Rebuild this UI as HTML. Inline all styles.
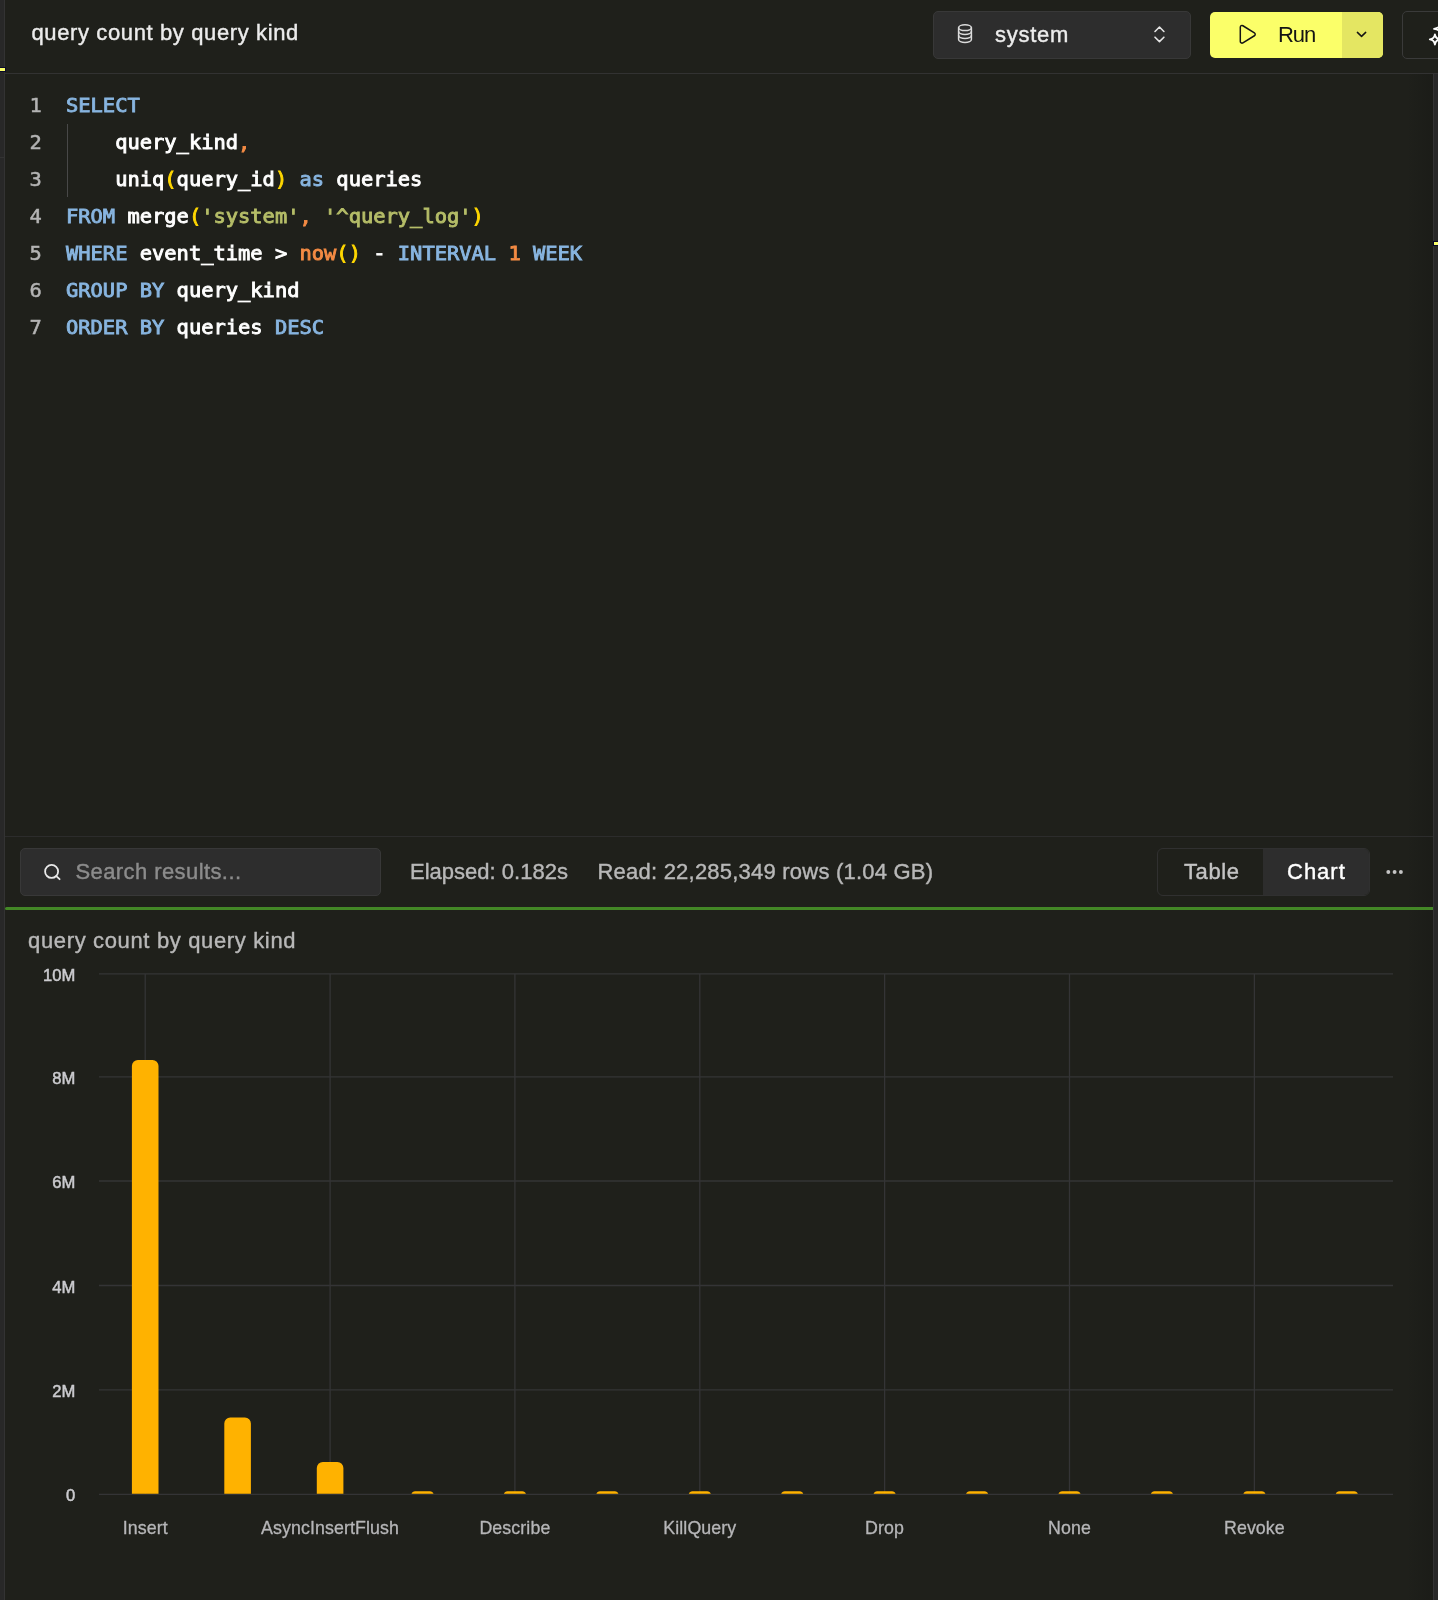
<!DOCTYPE html>
<html lang="en">
<head>
<meta charset="utf-8">
<title>query count by query kind</title>
<style>
*{box-sizing:border-box;margin:0;padding:0}
html,body{width:1438px;height:1600px;overflow:hidden;background:#1f201b}
body{position:relative;will-change:transform;font-family:"Liberation Sans",sans-serif;color:#e6e6e6}
.abs{position:absolute}
.t{position:absolute;white-space:nowrap;line-height:1;-webkit-text-stroke:.4px currentColor}
/* side strips */
#lstrip{left:0;top:0;width:5px;height:1600px;background:#282828;border-right:1px solid #333}
#rstrip{left:1433px;top:74px;width:5px;height:1526px;background:#282828;border-left:1px solid #333}
#hdrline{left:5px;top:73px;width:1433px;height:1px;background:#323232}
#resline{left:5px;top:836px;width:1428px;height:1px;background:#2c2c2c}
#green{left:5px;top:907px;width:1428px;height:3px;background:#438726;border-radius:2px 0 0 2px}
.box{position:absolute;background:#2d2d2d;border:1px solid #383838;border-radius:5px}
/* code */
#code{position:absolute;left:0;top:86.6px;width:1400px;font-family:"DejaVu Sans Mono","Liberation Mono",monospace;font-size:20px;line-height:37px;color:#fff;-webkit-text-stroke:0.9px currentColor}
#code .ln{position:absolute;left:0;width:41.800px;text-align:right;color:#b4b4b4;-webkit-text-stroke:.5px currentColor;transform:scaleX(1.0205);transform-origin:100% 50%;height:37px}
#code .cl{position:absolute;left:66px;white-space:pre;transform:scaleX(1.0205);transform-origin:0 50%;height:37px}
.k{color:#88b5e0}.s{color:#b5bd68}.p{color:#ffd700}.o{color:#f48b44}.n{color:#f48b44}.f{color:#f48b44}
</style>
</head>
<body>
<div id="lstrip" class="abs"></div>
<div id="rstrip" class="abs"></div>
<div class="abs" style="left:0;top:68px;width:5px;height:3px;background:#faff69;box-shadow:0 0 0 1px #0a0a2a"></div>
<div class="abs" style="left:0;top:157px;width:4px;height:1px;background:#333"></div>
<div class="abs" style="left:1434px;top:242px;width:4px;height:3px;background:#faff69;box-shadow:0 0 0 1px #07062a"></div>
<div class="abs" style="left:1406px;top:74px;width:27px;height:1526px;background:linear-gradient(to right,rgba(0,0,0,0),rgba(8,8,8,.16))"></div>
<div id="hdrline" class="abs"></div>

<!-- header -->
<div class="t" id="title" style="left:31.500px;top:21.5px;font-size:22px;letter-spacing:.62px;color:#ececec">query count by query kind</div>

<div class="box" style="left:933px;top:11px;width:258px;height:48px"></div>
<div class="t" id="sys" style="left:995px;top:23.5px;font-size:22px;letter-spacing:.75px;color:#ececec">system</div>

<div class="abs" id="runbtn" style="left:1210px;top:12px;width:173px;height:46px;border-radius:5px;background:#fbff69;overflow:hidden"><div class="abs" style="left:132px;top:0;width:41px;height:46px;background:#e4e662"></div></div>
<div class="t" id="run" style="left:1278px;top:23.5px;font-size:22px;letter-spacing:-1.1px;color:#141414;-webkit-text-stroke:0">Run</div>

<div class="abs" style="left:1402px;top:11px;width:60px;height:48px;border:1px solid #3a3a3a;border-radius:5px"></div>

<!-- code editor -->
<div id="code">
<div class="ln" style="top:0">1</div><div class="cl" style="top:0"><span class="k">SELECT</span></div>
<div class="ln" style="top:37px">2</div><div class="cl" style="top:37px">    query_kind<span class="o">,</span></div>
<div class="ln" style="top:74px">3</div><div class="cl" style="top:74px">    uniq<span class="p">(</span>query_id<span class="p">)</span> <span class="k">as</span> queries</div>
<div class="ln" style="top:111px">4</div><div class="cl" style="top:111px"><span class="k">FROM</span> merge<span class="p">(</span><span class="s">'system'</span><span class="o">,</span> <span class="s">'^query_log'</span><span class="p">)</span></div>
<div class="ln" style="top:148px">5</div><div class="cl" style="top:148px"><span class="k">WHERE</span> event_time &gt; <span class="f">now</span><span class="p">()</span> - <span class="k">INTERVAL</span> <span class="n">1</span> <span class="k">WEEK</span></div>
<div class="ln" style="top:185px">6</div><div class="cl" style="top:185px"><span class="k">GROUP BY</span> query_kind</div>
<div class="ln" style="top:222px">7</div><div class="cl" style="top:222px"><span class="k">ORDER BY</span> queries <span class="k">DESC</span></div>
</div>
<div class="abs" style="left:66.6px;top:124px;width:1.4px;height:73px;background:#484848"></div>

<!-- results toolbar -->
<div id="resline" class="abs"></div>
<div class="box" style="left:20px;top:848px;width:361px;height:48px"></div>
<div class="t" id="search" style="left:75.5px;top:860.5px;font-size:22px;letter-spacing:.41px;color:#8c8c8c">Search results...</div>
<div class="t" id="elapsed" style="left:410px;top:860.5px;font-size:22px;letter-spacing:.01px;color:#b8b8b8">Elapsed: 0.182s</div>
<div class="t" id="read" style="left:597.5px;top:860.5px;font-size:22px;letter-spacing:.22px;color:#b8b8b8">Read: 22,285,349 rows (1.04 GB)</div>
<div class="abs" style="left:1157px;top:848px;width:213px;height:48px;border:1px solid #303030;border-radius:6px;overflow:hidden"><div class="abs" style="left:105px;top:0;width:108px;height:48px;background:#2d2d2d"></div></div>
<div class="t" id="table" style="left:1184px;top:860.5px;font-size:22px;letter-spacing:.6px;color:#c4c4c4">Table</div>
<div class="t" id="chart" style="left:1287px;top:860.5px;font-size:22px;letter-spacing:1px;color:#fff">Chart</div>
<div id="green" class="abs"></div>

<!-- chart -->
<div class="t" id="ctitle" style="left:28px;top:930px;font-size:22px;letter-spacing:.65px;color:#b8b8b8">query count by query kind</div>
<svg id="chartsvg" class="abs" style="left:0;top:916px" width="1438" height="684" viewBox="0 916 1438 684" font-family="Liberation Sans, sans-serif">
<g stroke="#343436" stroke-width="1.3" fill="none">
<path d="M99 973.9H1393"/>
<path d="M99 1076.9H1393"/>
<path d="M99 1181.0H1393"/>
<path d="M99 1285.5H1393"/>
<path d="M99 1389.9H1393"/>
<path d="M99 1494.3H1393"/>
<path d="M145.2 973.9V1494.3"/>
<path d="M330.1 973.9V1494.3"/>
<path d="M514.9 973.9V1494.3"/>
<path d="M699.8 973.9V1494.3"/>
<path d="M884.6 973.9V1494.3"/>
<path d="M1069.5 973.9V1494.3"/>
<path d="M1254.4 973.9V1494.3"/>
</g>
<g fill="#ffb200">
<path d="M131.9 1493.8V1066.0a6 6 0 0 1 6 -6h14.6a6 6 0 0 1 6 6V1493.8z"/>
<path d="M224.3 1493.8V1423.5a6 6 0 0 1 6 -6h14.6a6 6 0 0 1 6 6V1493.8z"/>
<path d="M316.8 1493.8V1468.0a6 6 0 0 1 6 -6h14.6a6 6 0 0 1 6 6V1493.8z"/>
<path d="M411.5 1493.8c0.5 -1.6 1.8 -2.6 3.6 -2.6h14.8c1.8 0 3.1 1 3.6 2.6z"/>
<path d="M503.9 1493.8c0.5 -1.6 1.8 -2.6 3.6 -2.6h14.8c1.8 0 3.1 1 3.6 2.6z"/>
<path d="M596.4 1493.8c0.5 -1.6 1.8 -2.6 3.6 -2.6h14.8c1.8 0 3.1 1 3.6 2.6z"/>
<path d="M688.8 1493.8c0.5 -1.6 1.8 -2.6 3.6 -2.6h14.8c1.8 0 3.1 1 3.6 2.6z"/>
<path d="M781.2 1493.8c0.5 -1.6 1.8 -2.6 3.6 -2.6h14.8c1.8 0 3.1 1 3.6 2.6z"/>
<path d="M873.6 1493.8c0.5 -1.6 1.8 -2.6 3.6 -2.6h14.8c1.8 0 3.1 1 3.6 2.6z"/>
<path d="M966.1 1493.8c0.5 -1.6 1.8 -2.6 3.6 -2.6h14.8c1.8 0 3.1 1 3.6 2.6z"/>
<path d="M1058.5 1493.8c0.5 -1.6 1.8 -2.6 3.6 -2.6h14.8c1.8 0 3.1 1 3.6 2.6z"/>
<path d="M1150.9 1493.8c0.5 -1.6 1.8 -2.6 3.6 -2.6h14.8c1.8 0 3.1 1 3.6 2.6z"/>
<path d="M1243.4 1493.8c0.5 -1.6 1.8 -2.6 3.6 -2.6h14.8c1.8 0 3.1 1 3.6 2.6z"/>
<path d="M1335.8 1493.8c0.5 -1.6 1.8 -2.6 3.6 -2.6h14.8c1.8 0 3.1 1 3.6 2.6z"/>
</g>
<g fill="#cbcbcf" font-size="16.6" text-anchor="end" stroke="#cbcbcf" stroke-width="0.5">
<text x="75.3" y="981.0">10M</text>
<text x="75.3" y="1084.0">8M</text>
<text x="75.3" y="1188.1">6M</text>
<text x="75.3" y="1292.6">4M</text>
<text x="75.3" y="1397.0">2M</text>
<text x="75.3" y="1501.4">0</text>
</g>
<g fill="#b6b6b8" stroke="#b6b6b8" stroke-width="0.3" font-size="17.8" letter-spacing="0.1" text-anchor="middle">
<text id="xl0" x="145.2" y="1534">Insert</text>
<text id="xl1" x="330.1" y="1534">AsyncInsertFlush</text>
<text id="xl2" x="514.9" y="1534">Describe</text>
<text id="xl3" x="699.8" y="1534">KillQuery</text>
<text id="xl4" x="884.6" y="1534">Drop</text>
<text id="xl5" x="1069.5" y="1534">None</text>
<text id="xl6" x="1254.4" y="1534">Revoke</text>
</g>
</svg>
<svg class="abs" style="left:0;top:0" width="1438" height="920" viewBox="0 0 1438 920" fill="none" stroke-linecap="round" stroke-linejoin="round">
<g stroke="#dcdcdc" stroke-width="1.5"><ellipse cx="965" cy="27.7" rx="6.4" ry="2.9"/><path d="M958.6 27.7V39.5c0 1.6 2.9 2.9 6.4 2.9s6.4-1.3 6.4-2.9V27.7"/><path d="M958.6 31.6c0 1.6 2.9 2.9 6.4 2.9s6.4-1.3 6.4-2.9"/><path d="M958.6 35.6c0 1.6 2.9 2.9 6.4 2.9s6.4-1.3 6.4-2.9"/></g>
<path stroke="#e4e4e4" stroke-width="1.6" d="M1155 31.5l4.45-4.45 4.45 4.45M1155 37.2l4.45 4.45 4.45-4.45"/>
<path stroke="#141414" stroke-width="1.5" d="M1240.3 27.2a1.7 1.7 0 0 1 2.6-1.45l11.5 7.1a1.7 1.7 0 0 1 0 2.9l-11.5 7.1a1.7 1.7 0 0 1-2.6-1.45z"/>
<path stroke="#141414" stroke-width="1.5" d="M1357.4 32.4l4.15 4 4.15-4"/>
<g stroke="#fff" stroke-width="1.8"><path d="M1434.9 34.3c.5 3.4 1.7 4.6 5.1 5.1c-3.4.5-4.6 1.7-5.1 5.1c-.5-3.4-1.7-4.6-5.1-5.1c3.400-.5 4.600-1.700 5.100-5.100z"/><path d="M1441 21.800c.700 4.700 2.300 6.300 7 7c-4.700.7-6.300 2.300-7 7c-.7-4.700-2.300-6.300-7-7c4.700-.7 6.300-2.300 7-7z"/></g>
<g stroke="#e8e8e8" stroke-width="1.8"><circle cx="51.6" cy="871.4" r="6.5"/><path d="M56.300 876.100l3.300 3.100"/></g>
<g fill="#c4c4c4"><circle cx="1388.300" cy="872" r="1.950"/><circle cx="1394.600" cy="872" r="1.950"/><circle cx="1400.900" cy="872" r="1.950"/></g>
</svg>
</body>
</html>
